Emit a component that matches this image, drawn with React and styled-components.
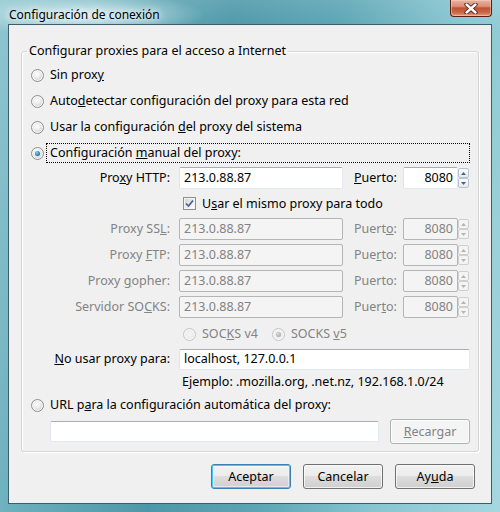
import React from 'react'
import styled, { createGlobalStyle, css } from 'styled-components'

const GlobalStyle = createGlobalStyle`
  html, body {
    margin: 0;
    padding: 0;
  }
  body {
    font-family: "Segoe UI", "Noto Sans", sans-serif;
    font-size: 12.5px;
    color: #000;
  }
`

const Window = styled.div`
  width: 500px;
  height: 512px;
  box-sizing: border-box;
  display: flex;
  flex-direction: column;
  padding: 0 8px 8px;
  background:
    radial-gradient(ellipse 120px 22px at 85px 15px, rgba(230, 246, 250, 0.85), rgba(230, 246, 250, 0) 100%),
    linear-gradient(180deg, rgba(255, 255, 255, 0.12), rgba(255, 255, 255, 0) 30px),
    linear-gradient(100deg, #8fc6d0 0%, #6aaebb 18%, #4d98a8 40%, #5aa4b3 58%, #86c5d0 78%, #a6d7e0 100%);
`

const TitleBar = styled.div`
  height: 29px;
  display: flex;
  justify-content: space-between;
  align-items: flex-start;
`

const Title = styled.div`
  padding: 7px 0 0 1px;
  font-size: 12px;
  line-height: 16px;
  text-shadow: 0 0 6px #ffffff, 0 0 10px #ffffff;
`

const CloseButton = styled.div`
  width: 42px;
  height: 17px;
  box-sizing: border-box;
  border: 1px solid #5a1e12;
  border-top: none;
  border-radius: 0 0 4px 4px;
  background: linear-gradient(180deg, #eab4a2 0%, #d88d74 40%, #c0502f 50%, #cc6a4c 80%, #e49e84 100%);
  box-shadow: inset 0 0 0 1px rgba(255, 220, 205, 0.45);
  display: flex;
  align-items: center;
  justify-content: center;
`

const Client = styled.div`
  flex: 1;
  border: 1px solid #3e5d6c;
  background: #f0f0f0;
  padding: 18px 16px 14px 12px;
  display: flex;
  flex-direction: column;
`

const Group = styled.fieldset`
  margin: 0 -4px 0 0;
  padding: 3px 0 7px 0;
  border: 1px solid #d5d5d5;
  border-radius: 3px;
  box-shadow: inset 1px 1px 0 #ffffff, 1px 1px 0 #ffffff;
  display: flex;
  flex-direction: column;
  min-width: 0;
`

const Legend = styled.legend`
  margin-left: 5px;
  padding: 0 2px;
  line-height: 16px;
`

const RadioRow = styled.div`
  height: ${p => p.$h || 26}px;
  display: flex;
  align-items: center;
  padding-left: ${p => p.$indent || 9}px;
  padding-right: 8px;
`

const RadioCircle = styled.span`
  width: 13px;
  height: 13px;
  box-sizing: border-box;
  border-radius: 50%;
  flex-shrink: 0;
  border: 1px solid ${p => (p.$disabled ? '#c4c4c4' : '#8e8f8f')};
  background: ${p =>
    p.$disabled
      ? 'radial-gradient(circle at 50% 50%, #f4f4f4 0%, #ebebeb 60%, #e0e0e0 100%)'
      : 'radial-gradient(circle at 45% 40%, #ffffff 0%, #eeeeee 35%, #cfcfcf 75%, #e8e8e8 100%)'};
  box-shadow: inset 0 0 0 1px #fbfbfb;
  display: flex;
  align-items: center;
  justify-content: center;
  &::after {
    content: '';
    display: ${p => (p.$checked ? 'block' : 'none')};
    width: 5px;
    height: 5px;
    border-radius: 50%;
    background: ${p =>
      p.$disabled
        ? 'radial-gradient(circle at 40% 35%, #d8d8d8, #9e9e9e)'
        : 'radial-gradient(circle at 40% 35%, #7fd2ff, #1b6ca8 70%, #0e4a7c)'};
  }
`

const ChoiceLabel = styled.span`
  margin-left: 2px;
  padding: 0 3px;
  line-height: 18px;
  white-space: nowrap;
  border: 1px dotted ${p => (p.$focused ? '#000' : 'transparent')};
  color: ${p => (p.$disabled ? '#838383' : '#000')};
  ${p => p.$focused && css`flex: 1;`}
`

const FieldGrid = styled.div`
  display: grid;
  grid-template-columns: ${p => p.$cols || '157px 175px 49px 66px'};
  align-items: center;
  height: 22px;
  margin-top: ${p => p.$mt || 0}px;
`

const FieldLabel = styled.span`
  text-align: ${p => (p.$left ? 'left' : 'right')};
  padding-right: ${p => (p.$left ? 0 : 9)}px;
  line-height: 16px;
  white-space: nowrap;
  color: ${p => (p.$disabled ? '#838383' : '#000')};
`

const TextBox = styled.div`
  box-sizing: border-box;
  height: ${p => p.$h || 22}px;
  width: ${p => (p.$w ? `${p.$w}px` : 'auto')};
  padding: 0 4px;
  display: flex;
  align-items: center;
  justify-content: ${p => (p.$right ? 'flex-end' : 'flex-start')};
  line-height: 16px;
  white-space: nowrap;
  border: 1px solid;
  border-radius: 2px;
  ${p =>
    p.$disabled
      ? css`
          border-color: #b5b5b5;
          background: #f4f4f4;
          color: #838383;
        `
      : css`
          border-color: #abadb3 #e3e9ef #e3e9ef #e2e3ea;
          background: #ffffff;
          color: #000;
        `}
`

const PortBox = styled.div`
  display: flex;
  height: 22px;
`

const Spinner = styled.div`
  width: 11px;
  display: flex;
  flex-direction: column;
  padding: 1px 0;
  box-sizing: border-box;
`

const SpinHalf = styled.div`
  flex: 1;
  box-sizing: border-box;
  border: 1px solid ${p => (p.$disabled ? '#cfcfcf' : '#b9c3cf')};
  border-radius: 2px;
  background: ${p => (p.$disabled ? '#f4f4f4' : 'linear-gradient(180deg, #fbfbfb, #e6eaef)')};
  display: flex;
  align-items: center;
  justify-content: center;
`

const CheckRow = styled.div`
  height: 29px;
  display: flex;
  align-items: center;
  padding-left: 161px;
`

const CheckBox = styled.span`
  width: 13px;
  height: 13px;
  box-sizing: border-box;
  border: 1px solid #8e8f8f;
  background: linear-gradient(135deg, #cbcfd5 0%, #f4f4f4 70%, #ffffff 100%);
  box-shadow: inset 0 0 0 1px #f4f4f4;
  display: flex;
  align-items: center;
  justify-content: center;
  margin-right: 6px;
`

const PlainRow = styled.div`
  display: flex;
  align-items: center;
  height: ${p => p.$h}px;
  margin-top: ${p => p.$mt || 0}px;
  padding-left: ${p => p.$indent || 0}px;
  gap: ${p => p.$gap || 0}px;
`

const Note = styled.span`
  line-height: 16px;
  white-space: nowrap;
`

const Spacer = styled.span`
  width: ${p => p.$w}px;
  flex-shrink: 0;
`

const PushButton = styled.div`
  box-sizing: border-box;
  width: ${p => p.$w || 80}px;
  height: 25px;
  border: 1px solid ${p => (p.$disabled ? '#adb2b5' : p.$default ? '#3c7fb1' : '#707070')};
  border-radius: 3px;
  display: flex;
  align-items: center;
  justify-content: center;
  line-height: 16px;
  color: ${p => (p.$disabled ? '#838383' : '#000')};
  background: ${p =>
    p.$disabled ? '#f4f4f4' : 'linear-gradient(180deg, #f2f2f2 0%, #ebebeb 49%, #dddddd 50%, #cfcfcf 100%)'};
  box-shadow: ${p =>
    p.$default
      ? 'inset 0 0 0 1px #48c6f5, inset 0 0 0 2px rgba(255,255,255,0.5)'
      : 'inset 0 0 0 1px rgba(255,255,255,0.7)'};
`

const ButtonBar = styled.div`
  display: flex;
  justify-content: flex-end;
  gap: 12px;
  margin-top: 12px;
`

function CloseGlyph() {
  return (
    <svg width="14" height="11" viewBox="0 0 14 11">
      <path d="M2.5 1.5 L11.5 9.5 M11.5 1.5 L2.5 9.5" stroke="#4a1a10" strokeWidth="4.2" strokeLinecap="round" fill="none" />
      <path d="M2.5 1.5 L11.5 9.5 M11.5 1.5 L2.5 9.5" stroke="#ffffff" strokeWidth="2.4" strokeLinecap="round" fill="none" />
    </svg>
  )
}

function CheckGlyph() {
  return (
    <svg width="9" height="9" viewBox="0 0 9 9">
      <path d="M1 4.5 L3.5 7 L8 1.5" stroke="#4a5f97" strokeWidth="1.7" fill="none" />
    </svg>
  )
}

function Arrow({ up, disabled }) {
  return (
    <svg width="5" height="3" viewBox="0 0 5 3">
      <path d={up ? 'M0 3 L2.5 0 L5 3 Z' : 'M0 0 L2.5 3 L5 0 Z'} fill={disabled ? '#b4b4b4' : '#4d6185'} />
    </svg>
  )
}

function Port({ disabled }) {
  return (
    <PortBox>
      <TextBox $w={55} $right $disabled={disabled}>8080</TextBox>
      <Spinner>
        <SpinHalf $disabled={disabled}><Arrow up disabled={disabled} /></SpinHalf>
        <SpinHalf $disabled={disabled}><Arrow disabled={disabled} /></SpinHalf>
      </Spinner>
    </PortBox>
  )
}

function Radio({ checked, disabled, focused, children }) {
  return (
    <>
      <RadioCircle $checked={checked} $disabled={disabled} />
      <ChoiceLabel $focused={focused} $disabled={disabled}>{children}</ChoiceLabel>
    </>
  )
}

const proxies = [
  { label: <>Proxy SS<u>L</u>:</>, port: <>Puert<u>o</u>:</>, mt: 0 },
  { label: <>Proxy <u>F</u>TP:</>, port: <>Pue<u>r</u>to:</>, mt: 4 },
  { label: <>Proxy <u>g</u>opher:</>, port: <>Puerto:</>, mt: 4 },
  { label: <>Servidor SO<u>C</u>KS:</>, port: <>Puer<u>t</u>o:</>, mt: 4 },
]

export default function App() {
  return (
    <Window>
      <GlobalStyle />
      <TitleBar>
        <Title>Configuración de conexión</Title>
        <CloseButton><CloseGlyph /></CloseButton>
      </TitleBar>
      <Client>
        <Group>
          <Legend>Configurar proxies para el acceso a Internet</Legend>

          <RadioRow><Radio>Sin prox<u>y</u></Radio></RadioRow>
          <RadioRow><Radio>Auto<u>d</u>etectar configuración del proxy para esta red</Radio></RadioRow>
          <RadioRow><Radio>Usar la configuración <u>d</u>el proxy del sistema</Radio></RadioRow>
          <RadioRow><Radio checked focused>Configuración <u>m</u>anual del proxy:</Radio></RadioRow>

          <FieldGrid $mt={1}>
            <FieldLabel>Pro<u>x</u>y HTTP:</FieldLabel>
            <TextBox $w={164}>213.0.88.87</TextBox>
            <FieldLabel $left><u>P</u>uerto:</FieldLabel>
            <Port />
          </FieldGrid>

          <CheckRow>
            <CheckBox><CheckGlyph /></CheckBox>
            <Note>U<u>s</u>ar el mismo proxy para todo</Note>
          </CheckRow>

          {proxies.map((p, i) => (
            <FieldGrid key={i} $mt={p.mt}>
              <FieldLabel $disabled>{p.label}</FieldLabel>
              <TextBox $w={164} $disabled>213.0.88.87</TextBox>
              <FieldLabel $left $disabled>{p.port}</FieldLabel>
              <Port disabled />
            </FieldGrid>
          ))}

          <RadioRow $h={22} $indent={161} style={{ marginTop: 5 }}>
            <Radio disabled>SOC<u>K</u>S v4</Radio>
            <Spacer $w={10} />
            <Radio checked disabled>SOCKS <u>v</u>5</Radio>
          </RadioRow>

          <FieldGrid $mt={3} $cols="157px 291px">
            <FieldLabel><u>N</u>o usar proxy para:</FieldLabel>
            <TextBox $w={291} $h={21}>localhost, 127.0.0.1</TextBox>
          </FieldGrid>

          <PlainRow $h={22} $indent={160} $mt={1}>
            <Note>Ejemplo: .mozilla.org, .net.nz, 192.168.1.0/24</Note>
          </PlainRow>

          <RadioRow $h={24}><Radio>URL p<u>a</u>ra la configuración automática del proxy:</Radio></RadioRow>

          <PlainRow $h={25} $indent={28} $gap={11} $mt={2}>
            <TextBox $w={329} $h={21} />
            <PushButton $disabled><span><u>R</u>ecargar</span></PushButton>
          </PlainRow>
        </Group>

        <ButtonBar>
          <PushButton $default>Aceptar</PushButton>
          <PushButton>Cancelar</PushButton>
          <PushButton>Ay<u>u</u>da</PushButton>
        </ButtonBar>
      </Client>
    </Window>
  )
}
